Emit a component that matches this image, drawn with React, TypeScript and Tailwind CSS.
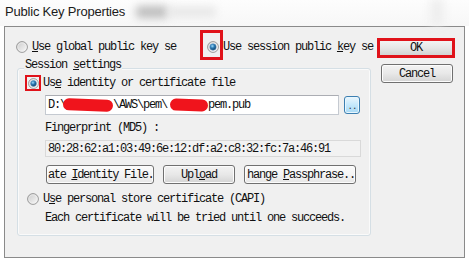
import { useId } from 'react';

const mono =
  "font-['Liberation_Mono',monospace] text-[12px] leading-[12px] tracking-[-1.2px] text-[#111] whitespace-nowrap";

const btn =
  'h-[19px] rounded-[3px] border border-[#707070] bg-gradient-to-b from-[#f3f3f3] via-[#e8e8e8] to-[#d4d4d4] shadow-[inset_0_0_0_1px_#fcfcfc] flex items-center overflow-hidden';

function Radio({ checked, size = 12 }: { checked?: boolean; size?: number }) {
  const id = useId();
  return (
    <svg width={size} height={size} viewBox="0 0 12 12" className="shrink-0">
      <defs>
        <linearGradient id={`${id}-bg`} x1="0" y1="0" x2="1" y2="1">
          <stop offset="0" stopColor="#c9c9c9" />
          <stop offset="1" stopColor="#fbfbfb" />
        </linearGradient>
        <radialGradient id={`${id}-dot`} cx="0.4" cy="0.35" r="0.7">
          <stop offset="0" stopColor="#9fdcfb" />
          <stop offset="0.45" stopColor="#2a79b3" />
          <stop offset="1" stopColor="#0a3458" />
        </radialGradient>
      </defs>
      <circle cx="6" cy="6" r="5.4" fill={`url(#${id}-bg)`} stroke="#8e8f8f" strokeWidth="0.9" />
      <circle cx="6" cy="6" r="4.2" fill="none" stroke="#f4f4f4" strokeWidth="0.6" />
      {checked && <circle cx="6" cy="6" r="3.2" fill={`url(#${id}-dot)`} stroke="#5a9bcf" strokeWidth="0.5" />}
    </svg>
  );
}

function Scribble({ w, className }: { w: number; className?: string }) {
  return (
    <span
      className={`inline-block h-[12px] rounded-full bg-[#f0141c] rotate-[2deg] align-middle ${className ?? ''}`}
      style={{ width: w }}
    />
  );
}

export default function App() {
  return (
    <div className="w-[469px] h-[262px] bg-white overflow-hidden flex flex-col">
      {/* title */}
      <div className="h-[26px] flex items-center pl-[5px] pb-[2px] bg-gradient-to-b from-[#fdfdfd] to-[#f7f7f7]">
        <span className="font-['Liberation_Sans',Arial,sans-serif] text-[13px] tracking-[-0.2px] text-[#1b1b1b]">
          Public Key Properties
        </span>
        <span className="ml-[11px] w-[32px] h-[12px] rounded bg-[#bdbdbd] blur-[4px]" />
        <span className="w-[48px] h-[10px] rounded bg-[#e6e6e6] blur-[4px]" />
        <span className="ml-auto mr-[26px] w-[12px] h-[26px] bg-[#ececec] blur-[5px]" />
      </div>

      {/* dialog body */}
      <div className="ml-[4px] w-[461px] h-[232px] border border-[#8a8a8a] bg-[#f0f0f0] flex">
        <div className="w-[368px] pl-[11px] flex flex-col">
          <div className="mt-[3px] h-[30px] flex">
            <div className="flex items-center pt-[4px] gap-[4px]">
              <Radio />
              <span className={mono}>
                <u>U</u>se global public key se
              </span>
            </div>
            <div className="ml-[24px] w-[23px] h-[30px] border-[3px] border-[#e0121a] flex items-center pl-[4px] pt-[4px]">
              <Radio checked />
            </div>
            <div className="flex items-center pt-[4px]">
              <span className={mono}>
                Use session public <u>k</u>ey se
              </span>
            </div>
          </div>

          <div className="mt-[8px] ml-[1px] w-[354px] h-[168px] border border-[#d5dfe5] rounded-[3px] shadow-[inset_0_0_0_1px_#fafafa] flex flex-col">
            <span className={`${mono} -mt-[10px] ml-[6px] px-[1px] bg-[#f0f0f0] self-start`}>
              Session <u>s</u>ettings
            </span>

            <div className="mt-[4px] ml-[7px] flex items-center">
              <div className="w-[16px] h-[16px] border-2 border-[#e0121a] flex items-center justify-center">
                <Radio checked size={11} />
              </div>
              <span className={`${mono} ml-[2px]`}>
                Us<u>e</u> identity or certificate file
              </span>
            </div>

            <div className="mt-[4px] ml-[27px] flex items-center gap-[5px]">
              <div className="w-[294px] h-[20px] border border-[#c5cad1] border-t-[#abadb3] bg-white flex items-center pl-[2px]">
                <span className={mono}>D:\</span>
                <Scribble w={50} className="-ml-[3px]" />
                <span className={mono}>\AWS\pem\</span>
                <Scribble w={38} className="ml-[3px] h-[11px]" />
                <span className={mono}>pem.pub</span>
              </div>
              <div className="w-[16px] h-[18px] rounded-[3px] border border-[#3c7fb1] bg-gradient-to-b from-[#eaf6fd] via-[#c4e8fc] to-[#a7d9f5] shadow-[inset_0_0_0_1px_#e8f6fe] flex items-end justify-center pb-[2px]">
                <span className="font-['Liberation_Mono',monospace] text-[9px] leading-[8px] tracking-[-1px] text-[#333]">..</span>
              </div>
            </div>

            <span className={`${mono} mt-[7px] ml-[27px]`}>Fingerprint (MD5) :</span>

            <div className="mt-[6px] ml-[27px] w-[316px] h-[17px] border border-[#d9d9d9] bg-[#f2f2f2] flex items-center pl-[2px]">
              <span className={mono}>80:28:62:a1:03:49:6e:12:df:a2:c8:32:fc:7a:46:91</span>
            </div>

            <div className="mt-[8px] ml-[28px] flex gap-[9px]">
              <div className={`${btn} w-[108px] pl-[1px] from-[#fbfbfb] via-[#f4f4f4] to-[#e6e6e6]`}>
                <span className={`${mono} tracking-[-1.35px]`}>
                  ate <u>I</u>dentity File.
                </span>
              </div>
              <div className={`${btn} w-[72px] justify-center`}>
                <span className={mono}>
                  Upl<u>o</u>ad
                </span>
              </div>
              <div className={`${btn} w-[112px] pl-[2px] from-[#fbfbfb] via-[#f4f4f4] to-[#e6e6e6]`}>
                <span className={mono}>
                  hange <u>P</u>assphrase..
                </span>
              </div>
            </div>

            <div className="mt-[9px] ml-[9px] flex items-center gap-[4px]">
              <Radio />
              <span className={mono}>
                U<u>s</u>e personal store certificate (CAPI)
              </span>
            </div>

            <span className={`${mono} mt-[7px] ml-[27px]`}>
              Each certificate will be tried until one succeeds.
            </span>
          </div>
        </div>

        <div className="ml-[4px] pt-[11px] flex flex-col items-start">
          <div className="w-[78px] h-[20px] border-[3px] border-[#e0121a] bg-gradient-to-b from-[#f3f3f3] via-[#e6e6e6] to-[#d3d3d3] flex items-center justify-center">
            <span className={mono}>OK</span>
          </div>
          <div className={`${btn} mt-[6px] ml-[4px] w-[72px] h-[18px] justify-center`}>
            <span className={mono}>Cancel</span>
          </div>
        </div>
      </div>
    </div>
  );
}
